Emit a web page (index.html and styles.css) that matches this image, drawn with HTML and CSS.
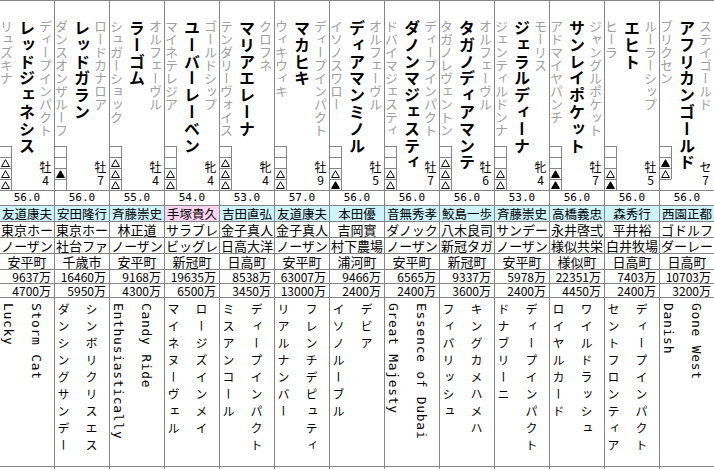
FILE: index.html
```html
<!DOCTYPE html>
<html lang="ja">
<head>
<meta charset="utf-8">
<link rel="stylesheet" href="styles.css">
</head>
<body>
<div class="board">
 <div class="col">
  <div class="top">
   <div class="names"><span class="dam">リュズキナ</span><span class="name">レッドジェネシス</span><span class="sire">ディープインパクト</span></div>
   <div class="foot"><div class="marks"><i></i><i><svg class="o" viewBox="0 0 9 8"><path d="M4.5 0.7 L8.4 7.5 H0.6 Z"/></svg></i><i><svg class="o" viewBox="0 0 9 8"><path d="M4.5 0.7 L8.4 7.5 H0.6 Z"/></svg></i><i><svg class="o" viewBox="0 0 9 8"><path d="M4.5 0.7 L8.4 7.5 H0.6 Z"/></svg></i></div><div class="sex">牡<br>4</div></div>
  </div>
  <div class="wt">56.0</div>
  <div class="tr">友道康夫</div>
  <div class="cell">東京ホー</div>
  <div class="cell">ノーザン</div>
  <div class="cell">安平町</div>
  <div class="pz">9637万</div>
  <div class="pz">4700万</div>
  <div class="ped"><span class="en">Lucky</span><span class="en">Storm Cat</span></div>
  <div class="tail"></div>
 </div>
 <div class="col">
  <div class="top">
   <div class="names"><span class="dam">ダンスオンザルーフ</span><span class="name">レッドガラン</span><span class="sire">ロードカナロア</span></div>
   <div class="foot"><div class="marks"><i></i><i></i><i><svg class="f" viewBox="0 0 9 8"><path d="M4.5 0.7 L8.4 7.5 H0.6 Z"/></svg></i><i></i></div><div class="sex">牡<br>7</div></div>
  </div>
  <div class="wt">56.0</div>
  <div class="tr">安田隆行</div>
  <div class="cell">東京ホー</div>
  <div class="cell">社台ファ</div>
  <div class="cell">千歳市</div>
  <div class="pz">16460万</div>
  <div class="pz">5950万</div>
  <div class="ped"><span>ダンシングサンデー</span><span>シンボリクリスエス</span></div>
  <div class="tail"></div>
 </div>
 <div class="col">
  <div class="top">
   <div class="names"><span class="dam">シュガーショック</span><span class="name">ラーゴム</span><span class="sire">オルフェーヴル</span></div>
   <div class="foot"><div class="marks"><i></i><i><svg class="o" viewBox="0 0 9 8"><path d="M4.5 0.7 L8.4 7.5 H0.6 Z"/></svg></i><i><svg class="o" viewBox="0 0 9 8"><path d="M4.5 0.7 L8.4 7.5 H0.6 Z"/></svg></i><i><svg class="o" viewBox="0 0 9 8"><path d="M4.5 0.7 L8.4 7.5 H0.6 Z"/></svg></i></div><div class="sex">牡<br>4</div></div>
  </div>
  <div class="wt">55.0</div>
  <div class="tr">斉藤崇史</div>
  <div class="cell">林正道</div>
  <div class="cell">ノーザン</div>
  <div class="cell">安平町</div>
  <div class="pz">9168万</div>
  <div class="pz">4300万</div>
  <div class="ped"><span class="en">Enthusiastically</span><span class="en">Candy Ride</span></div>
  <div class="tail"></div>
 </div>
 <div class="col">
  <div class="top">
   <div class="names"><span class="dam">マイネテレジア</span><span class="name">ユーバーレーベン</span><span class="sire">ゴールドシップ</span></div>
   <div class="foot"><div class="marks"><i></i><i></i><i><svg class="o" viewBox="0 0 9 8"><path d="M4.5 0.7 L8.4 7.5 H0.6 Z"/></svg></i><i><svg class="o" viewBox="0 0 9 8"><path d="M4.5 0.7 L8.4 7.5 H0.6 Z"/></svg></i></div><div class="sex">牝<br>4</div></div>
  </div>
  <div class="wt">54.0</div>
  <div class="tr east">手塚貴久</div>
  <div class="cell">サラブレ</div>
  <div class="cell">ビッグレ</div>
  <div class="cell">新冠町</div>
  <div class="pz">19635万</div>
  <div class="pz">6500万</div>
  <div class="ped"><span>マイネヌーヴェル</span><span>ロージズインメイ</span></div>
  <div class="tail"></div>
 </div>
 <div class="col">
  <div class="top">
   <div class="names"><span class="dam">テンダリーヴォイス</span><span class="name">マリアエレーナ</span><span class="sire">クロフネ</span></div>
   <div class="foot"><div class="marks"><i></i><i><svg class="o" viewBox="0 0 9 8"><path d="M4.5 0.7 L8.4 7.5 H0.6 Z"/></svg></i><i><svg class="o" viewBox="0 0 9 8"><path d="M4.5 0.7 L8.4 7.5 H0.6 Z"/></svg></i><i><svg class="o" viewBox="0 0 9 8"><path d="M4.5 0.7 L8.4 7.5 H0.6 Z"/></svg></i></div><div class="sex">牝<br>4</div></div>
  </div>
  <div class="wt">53.0</div>
  <div class="tr">吉田直弘</div>
  <div class="cell">金子真人</div>
  <div class="cell">日高大洋</div>
  <div class="cell">日高町</div>
  <div class="pz">8538万</div>
  <div class="pz">3450万</div>
  <div class="ped"><span>ミスアンコール</span><span>ディープインパクト</span></div>
  <div class="tail"></div>
 </div>
 <div class="col">
  <div class="top">
   <div class="names"><span class="dam">ウィキウィキ</span><span class="name">マカヒキ</span><span class="sire">ディープインパクト</span></div>
   <div class="foot"><div class="marks"><i></i><i></i><i><svg class="o" viewBox="0 0 9 8"><path d="M4.5 0.7 L8.4 7.5 H0.6 Z"/></svg></i><i><svg class="o" viewBox="0 0 9 8"><path d="M4.5 0.7 L8.4 7.5 H0.6 Z"/></svg></i></div><div class="sex">牡<br>9</div></div>
  </div>
  <div class="wt">57.0</div>
  <div class="tr">友道康夫</div>
  <div class="cell">金子真人</div>
  <div class="cell">ノーザン</div>
  <div class="cell">安平町</div>
  <div class="pz">63007万</div>
  <div class="pz">13000万</div>
  <div class="ped"><span>リアルナンバー</span><span>フレンチデピュティ</span></div>
  <div class="tail"></div>
 </div>
 <div class="col">
  <div class="top">
   <div class="names"><span class="dam">イソノスワロー</span><span class="name">ディアマンミノル</span><span class="sire">オルフェーヴル</span></div>
   <div class="foot"><div class="marks"><i></i><i></i><i><svg class="o" viewBox="0 0 9 8"><path d="M4.5 0.7 L8.4 7.5 H0.6 Z"/></svg></i><i><svg class="f" viewBox="0 0 9 8"><path d="M4.5 0.7 L8.4 7.5 H0.6 Z"/></svg></i></div><div class="sex">牡<br>5</div></div>
  </div>
  <div class="wt">56.0</div>
  <div class="tr">本田優</div>
  <div class="cell">吉岡實</div>
  <div class="cell">村下農場</div>
  <div class="cell">浦河町</div>
  <div class="pz">9466万</div>
  <div class="pz">2400万</div>
  <div class="ped"><span>イソノルーブル</span><span>デビア</span></div>
  <div class="tail"></div>
 </div>
 <div class="col">
  <div class="top">
   <div class="names"><span class="dam">ドバイマジェスティ</span><span class="name">ダノンマジェスティ</span><span class="sire">ディープインパクト</span></div>
   <div class="foot"><div class="marks"><i></i><i></i><i><svg class="o" viewBox="0 0 9 8"><path d="M4.5 0.7 L8.4 7.5 H0.6 Z"/></svg></i><i><svg class="o" viewBox="0 0 9 8"><path d="M4.5 0.7 L8.4 7.5 H0.6 Z"/></svg></i></div><div class="sex">牡<br>7</div></div>
  </div>
  <div class="wt">56.0</div>
  <div class="tr">音無秀孝</div>
  <div class="cell">ダノック</div>
  <div class="cell">ノーザン</div>
  <div class="cell">安平町</div>
  <div class="pz">6565万</div>
  <div class="pz">2400万</div>
  <div class="ped"><span class="en">Great Majesty</span><span class="en">Essence of Dubai</span></div>
  <div class="tail"></div>
 </div>
 <div class="col">
  <div class="top">
   <div class="names"><span class="dam">タガノレヴェントン</span><span class="name">タガノディアマンテ</span><span class="sire">オルフェーヴル</span></div>
   <div class="foot"><div class="marks"><i></i><i><svg class="o" viewBox="0 0 9 8"><path d="M4.5 0.7 L8.4 7.5 H0.6 Z"/></svg></i><i><svg class="o" viewBox="0 0 9 8"><path d="M4.5 0.7 L8.4 7.5 H0.6 Z"/></svg></i><i><svg class="o" viewBox="0 0 9 8"><path d="M4.5 0.7 L8.4 7.5 H0.6 Z"/></svg></i></div><div class="sex">牡<br>6</div></div>
  </div>
  <div class="wt">56.0</div>
  <div class="tr">鮫島一歩</div>
  <div class="cell">八木良司</div>
  <div class="cell">新冠タガ</div>
  <div class="cell">新冠町</div>
  <div class="pz">9337万</div>
  <div class="pz">3600万</div>
  <div class="ped"><span>フィバリッシュ</span><span>キングカメハメハ</span></div>
  <div class="tail"></div>
 </div>
 <div class="col">
  <div class="top">
   <div class="names"><span class="dam">ジェンティルドンナ</span><span class="name">ジェラルディーナ</span><span class="sire">モーリス</span></div>
   <div class="foot"><div class="marks"><i></i><i></i><i><svg class="o" viewBox="0 0 9 8"><path d="M4.5 0.7 L8.4 7.5 H0.6 Z"/></svg></i><i><svg class="o" viewBox="0 0 9 8"><path d="M4.5 0.7 L8.4 7.5 H0.6 Z"/></svg></i></div><div class="sex">牝<br>4</div></div>
  </div>
  <div class="wt">53.0</div>
  <div class="tr">斉藤崇史</div>
  <div class="cell">サンデー</div>
  <div class="cell">ノーザン</div>
  <div class="cell">安平町</div>
  <div class="pz">5978万</div>
  <div class="pz">2400万</div>
  <div class="ped"><span>ドナブリーニ</span><span>ディープインパクト</span></div>
  <div class="tail"></div>
 </div>
 <div class="col">
  <div class="top">
   <div class="names"><span class="dam">アドマイヤパンチ</span><span class="name">サンレイポケット</span><span class="sire">ジャングルポケット</span></div>
   <div class="foot"><div class="marks"><i></i><i></i><i><svg class="f" viewBox="0 0 9 8"><path d="M4.5 0.7 L8.4 7.5 H0.6 Z"/></svg></i><i><svg class="f" viewBox="0 0 9 8"><path d="M4.5 0.7 L8.4 7.5 H0.6 Z"/></svg></i></div><div class="sex">牡<br>7</div></div>
  </div>
  <div class="wt">56.0</div>
  <div class="tr">高橋義忠</div>
  <div class="cell">永井啓弍</div>
  <div class="cell">様似共栄</div>
  <div class="cell">様似町</div>
  <div class="pz">22351万</div>
  <div class="pz">4450万</div>
  <div class="ped"><span>ロイヤルカード</span><span>ワイルドラッシュ</span></div>
  <div class="tail"></div>
 </div>
 <div class="col">
  <div class="top">
   <div class="names"><span class="dam">ヒーラ</span><span class="name">エヒト</span><span class="sire">ルーラーシップ</span></div>
   <div class="foot"><div class="marks"><i></i><i></i><i><svg class="o" viewBox="0 0 9 8"><path d="M4.5 0.7 L8.4 7.5 H0.6 Z"/></svg></i><i><svg class="f" viewBox="0 0 9 8"><path d="M4.5 0.7 L8.4 7.5 H0.6 Z"/></svg></i></div><div class="sex">牡<br>5</div></div>
  </div>
  <div class="wt">56.0</div>
  <div class="tr">森秀行</div>
  <div class="cell">平井裕</div>
  <div class="cell">白井牧場</div>
  <div class="cell">日高町</div>
  <div class="pz">7403万</div>
  <div class="pz">2400万</div>
  <div class="ped"><span>セントフロンティア</span><span>ディープインパクト</span></div>
  <div class="tail"></div>
 </div>
 <div class="col">
  <div class="top">
   <div class="names"><span class="dam">ブリクセン</span><span class="name">アフリカンゴールド</span><span class="sire">ステイゴールド</span></div>
   <div class="foot"><div class="marks"><i></i><i><svg class="f" viewBox="0 0 9 8"><path d="M4.5 0.7 L8.4 7.5 H0.6 Z"/></svg></i><i><svg class="o" viewBox="0 0 9 8"><path d="M4.5 0.7 L8.4 7.5 H0.6 Z"/></svg></i><i class="none"></i></div><div class="sex">セ<br>7</div></div>
  </div>
  <div class="wt">56.0</div>
  <div class="tr">西園正都</div>
  <div class="cell">ゴドルフ</div>
  <div class="cell">ダーレー</div>
  <div class="cell">日高町</div>
  <div class="pz">10703万</div>
  <div class="pz">3200万</div>
  <div class="ped"><span class="en">Danish</span><span class="en">Gone West</span></div>
  <div class="tail"></div>
 </div>
</div>
</body>
</html>
```

FILE: styles.css
```css
html, body {
  margin: 0;
  padding: 0;
  background: #fff;
}
body {
  font-family: "Noto Sans CJK JP", "Noto Sans", sans-serif;
  color: #000;
  overflow: hidden;
}
.board {
  display: flex;
  margin-left: -1px;
  border-top: 1px solid #858585;
  width: 716px;
}
.col {
  flex: none;
  width: 55px;
  box-sizing: border-box;
  border-left: 1px solid #858585;
  display: flex;
  flex-direction: column;
}
.top {
  height: 189px;
  border-bottom: 1px solid #858585;
  display: flex;
  flex-direction: column;
}
.names {
  flex: 1;
  min-height: 0;
  display: flex;
  padding-top: 19px;
}
.names span {
  writing-mode: vertical-rl;
  white-space: nowrap;
}
.dam, .sire {
  width: 13px;
  line-height: 13px;
  font-size: 13px;
  color: #a0a0a0;
}
.name {
  width: 18px;
  line-height: 18px;
  font-size: 16px;
  font-weight: bold;
  letter-spacing: 0.8px;
  margin-left: 5px;
}
.sire {
  margin-left: 3px;
}
.foot {
  height: 44px;
  display: flex;
  justify-content: space-between;
}
.marks {
  display: flex;
  flex-direction: column;
}
.marks i {
  display: block;
  width: 11px;
  height: 10px;
  border-top: 1px solid #858585;
  border-right: 1px solid #858585;
}
.marks i.none {
  border-right-color: transparent;
}
.marks svg {
  display: block;
  width: 9px;
  height: 8px;
  margin: 1px 0 0 1px;
}
.marks svg path {
  stroke: #000;
  stroke-width: 1;
  stroke-linejoin: miter;
}
.marks svg.o path {
  fill: none;
}
.marks svg.f path {
  fill: #000;
}
.sex {
  align-self: flex-end;
  width: 13px;
  margin: 0 2px 4px 0;
  font-size: 12px;
  line-height: 13px;
  text-align: center;
}
.wt {
  height: 14px;
  border-bottom: 1px solid #858585;
  font-family: "DejaVu Sans Mono", monospace;
  font-size: 11px;
  line-height: 14px;
  text-align: center;
}
.tr, .cell, .pz {
  height: 15px;
  border-bottom: 1px solid #858585;
  font-size: 12.5px;
  line-height: 15px;
  text-align: center;
  white-space: nowrap;
}
.tr {
  background: #cdf3fb;
}
.tr.east {
  background: #fcd3f1;
}
.cell {
  font-size: 13px;
}
.pz {
  height: 13px;
  line-height: 13px;
  font-size: 12px;
  text-align: right;
  padding-right: 3px;
}
.ped {
  height: 163px;
  border-bottom: 1px solid #858585;
  display: flex;
  gap: 14px;
  padding: 5px 0 0 1px;
}
.ped span {
  writing-mode: vertical-rl;
  white-space: nowrap;
  width: 14px;
  line-height: 14px;
  font-size: 12px;
  letter-spacing: 5px;
}
.ped .en {
  font-family: "DejaVu Sans Mono", monospace;
  font-size: 13px;
  letter-spacing: 0.7px;
}
.tail {
  height: 10px;
}
```
